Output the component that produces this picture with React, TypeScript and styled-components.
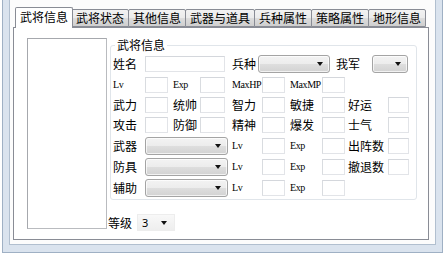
import React from 'react';
import styled, { createGlobalStyle } from 'styled-components';

const GlobalStyle = createGlobalStyle`
  html, body {
    margin: 0;
    padding: 0;
    background: #fff;
  }
  body {
    font-family: "Noto Sans CJK SC", "Noto Sans", sans-serif;
    font-size: 12px;
    color: #000;
  }
`;

const Screen = styled.div`
  width: 444px;
  height: 261px;
  overflow: hidden;
  background: #fff;
`;

const Frame = styled.div`
  margin-left: 2px;
  width: 441px;
  height: 253px;
  box-sizing: border-box;
  border: 1px solid #9fb0c4;
  border-top: none;
  background: #dae3ee;
  padding: 0 6px 7px 6px;
`;

const Client = styled.div`
  height: 100%;
  box-sizing: border-box;
  border: 1px solid #b1bfcf;
  border-top: none;
  background: #fcfcfc;
  padding: 7px 0 0 3px;
`;

const TabControl = styled.div`
  width: 416px;
`;

const TabStrip = styled.div`
  display: flex;
  align-items: flex-end;
  height: 20px;
  padding-left: 4px;
  position: relative;
  z-index: 1;
`;

const Tab = styled.div<{ $active?: boolean }>`
  box-sizing: border-box;
  height: ${p => (p.$active ? 21 : 18)}px;
  padding: 0 4px;
  margin: 0 ${p => (p.$active ? -2 : -1)}px ${p => (p.$active ? -1 : 0)}px ${p => (p.$active ? -2 : 0)}px;
  border: 1px solid #898c95;
  border-bottom: ${p => (p.$active ? 'none' : '1px solid #898c95')};
  border-radius: 2px 2px 0 0;
  background: ${p =>
    p.$active ? '#fff' : 'linear-gradient(#f2f2f2, #ebebeb 50%, #dddddd 50%, #cfcfcf)'};
  line-height: ${p => (p.$active ? 18 : 16)}px;
  white-space: nowrap;
  position: relative;
  z-index: ${p => (p.$active ? 2 : 1)};
`;

const Panel = styled.div`
  box-sizing: border-box;
  height: 213px;
  border: 1px solid #898c95;
  background: #fff;
  display: flex;
  padding: 10px 0 0 13px;
`;

const Portrait = styled.div`
  flex-shrink: 0;
  box-sizing: border-box;
  width: 80px;
  height: 191px;
  border: 1px solid #a6a8ad;
  border-right-color: #b9bbbf;
  border-bottom-color: #b9bbbf;
  background: #fff;
`;

const Side = styled.div`
  margin-left: 3px;
  width: 307px;
  display: flex;
  flex-direction: column;
`;

const Group = styled.fieldset`
  margin: 0;
  padding: 3px 2px 1px 2px;
  min-width: 0;
  border: 1px solid #e0e5ea;
  border-radius: 3px;
`;

const Legend = styled.legend`
  margin-left: 2px;
  padding: 0 2px;
  line-height: 14px;
  font-size: 12px;
`;

const TopRow = styled.div`
  display: flex;
  align-items: center;
  height: 18px;
`;

const Grid = styled.div`
  margin-top: 2px;
  display: grid;
  grid-template-columns: 30px 30px 25px 34px 28px 30px 30px 28px 38px 24px;
  grid-template-rows: 20px 20px 20px 21px 21px 21px;
  align-items: center;
`;

const Label = styled.span<{ $w?: number; $ml?: number }>`
  display: block;
  width: ${p => (p.$w ? `${p.$w}px` : 'auto')};
  margin-left: ${p => p.$ml ?? 0}px;
  line-height: 14px;
  white-space: nowrap;
`;

const Tag = styled.span`
  display: block;
  font-family: "Liberation Serif", serif;
  font-size: 10px;
  letter-spacing: -0.4px;
  line-height: 12px;
  white-space: nowrap;
  position: relative;
  z-index: 1;
`;

const TextBox = styled.div<{ $w: number }>`
  box-sizing: border-box;
  width: ${p => p.$w}px;
  height: 16px;
  margin-left: 2px;
  border: 1px solid #e2e4e8;
  border-top-color: #d4d7dc;
  border-left-color: #d9dce0;
  background: #fff;
`;

const Combo = styled.div<{ $w: number; $ml?: number }>`
  box-sizing: border-box;
  width: ${p => p.$w}px;
  height: 18px;
  margin-left: ${p => p.$ml ?? 2}px;
  border: 1px solid #a4a4a4;
  border-radius: 3px;
  background: linear-gradient(#f3f3f3, #ececec 50%, #dedede 50%, #d2d2d2);
  box-shadow: inset 0 0 0 1px rgba(255, 255, 255, 0.7);
  display: flex;
  align-items: center;
  justify-content: flex-end;
  padding-right: 6px;
`;

const Arrow = styled.span`
  width: 0;
  height: 0;
  border-left: 3.5px solid transparent;
  border-right: 3.5px solid transparent;
  border-top: 4px solid #111;
`;

const SpanCell = styled.div`
  grid-column: span 3;
`;

const LevelRow = styled.div`
  display: flex;
  align-items: center;
  margin: 14px 0 0 -2px;
  height: 17px;
`;

const FlatCombo = styled.div`
  box-sizing: border-box;
  width: 38px;
  height: 17px;
  margin-left: 4px;
  border: 1px solid #ededed;
  background: linear-gradient(#f8f8f8, #eeeeee);
  display: flex;
  align-items: center;
  justify-content: space-between;
  padding: 0 7px 0 4px;
  font-family: "Noto Sans", sans-serif;
  font-size: 11px;
`;

const tabs = ['武将信息', '武将状态', '其他信息', '武器与道具', '兵种属性', '策略属性', '地形信息'];
const boxW = [23, 25, 23, 23, 21];

type Cell = { text: string; latin?: boolean } | null;

const statRows: Cell[][] = [
  [{ text: 'Lv', latin: true }, { text: 'Exp', latin: true }, { text: 'MaxHP', latin: true }, { text: 'MaxMP', latin: true }, null],
  [{ text: '武力' }, { text: '统帅' }, { text: '智力' }, { text: '敏捷' }, { text: '好运' }],
  [{ text: '攻击' }, { text: '防御' }, { text: '精神' }, { text: '爆发' }, { text: '士气' }],
];

const gearRows: [string, string | null][] = [
  ['武器', '出阵数'],
  ['防具', '撤退数'],
  ['辅助', null],
];

const Cap = ({ cell }: { cell: Cell }) =>
  cell === null ? <span /> : cell.latin ? <Tag>{cell.text}</Tag> : <Label>{cell.text}</Label>;

export default function App() {
  return (
    <Screen>
      <GlobalStyle />
      <Frame>
        <Client>
          <TabControl>
            <TabStrip>
              {tabs.map((t, i) => (
                <Tab key={t} $active={i === 0}>
                  {t}
                </Tab>
              ))}
            </TabStrip>
            <Panel>
              <Portrait />
              <Side>
                <Group>
                  <Legend>武将信息</Legend>
                  <TopRow>
                    <Label $w={30}>姓名</Label>
                    <TextBox $w={80} />
                    <Label $w={24} $ml={7}>兵种</Label>
                    <Combo $w={72}>
                      <Arrow />
                    </Combo>
                    <Label $w={24} $ml={6}>我军</Label>
                    <Combo $w={36} $ml={12}>
                      <Arrow />
                    </Combo>
                  </TopRow>
                  <Grid>
                    {statRows.map((row, r) =>
                      row.map((cell, c) => (
                        <React.Fragment key={`${r}-${c}`}>
                          <Cap cell={cell} />
                          {cell === null ? <span /> : <TextBox $w={boxW[c]} />}
                        </React.Fragment>
                      ))
                    )}
                    {gearRows.map(([name, extra]) => (
                      <React.Fragment key={name}>
                        <Label>{name}</Label>
                        <SpanCell>
                          <Combo $w={83}>
                            <Arrow />
                          </Combo>
                        </SpanCell>
                        <Tag>Lv</Tag>
                        <TextBox $w={boxW[2]} />
                        <Tag>Exp</Tag>
                        <TextBox $w={boxW[3]} />
                        {extra ? <Label>{extra}</Label> : <span />}
                        {extra ? <TextBox $w={boxW[4]} /> : <span />}
                      </React.Fragment>
                    ))}
                  </Grid>
                </Group>
                <LevelRow>
                  <Label $w={25}>等级</Label>
                  <FlatCombo>
                    <span>3</span>
                    <Arrow />
                  </FlatCombo>
                </LevelRow>
              </Side>
            </Panel>
          </TabControl>
        </Client>
      </Frame>
    </Screen>
  );
}
